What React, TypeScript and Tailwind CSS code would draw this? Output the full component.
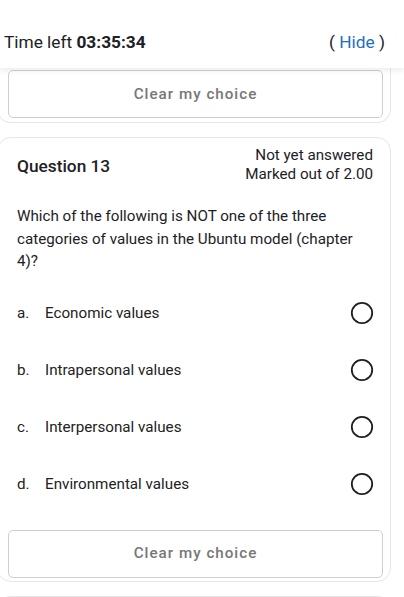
import React from "react";

const options = [
  { letter: "a.", label: "Economic values" },
  { letter: "b.", label: "Intrapersonal values" },
  { letter: "c.", label: "Interpersonal values" },
  { letter: "d.", label: "Environmental values" },
];

function Radio() {
  return (
    <svg width="24" height="24" viewBox="0 0 24 24" className="shrink-0">
      <circle cx="12" cy="12" r="10.2" fill="white" stroke="#1f1f1f" strokeWidth="1.8" />
    </svg>
  );
}

function ClearButton() {
  return (
    <button
      type="button"
      className="flex h-[48px] w-[375px] items-center justify-center rounded-[5px] border border-[#cfcfcf] bg-white text-[15.2px] font-medium tracking-[1px] text-[#777]"
    >
      Clear my choice
    </button>
  );
}

export default function App() {
  return (
    <div className="h-[597px] w-[404px] overflow-hidden bg-white font-['Roboto',sans-serif] text-[#1d2125]">
      {/* Timer bar */}
      <header className="relative z-10 flex h-[68px] items-start justify-between bg-white pl-[4px] pr-[19px] pt-[30px] text-[17.3px] leading-[24px] shadow-[0_3px_6px_rgba(0,0,0,0.07)]">
        <div>
          Time left <span className="font-bold">03:35:34</span>
        </div>
        <div>
          ( <span className="text-[#1f6fbf]">Hide</span> )
        </div>
      </header>

      {/* Previous question (tail) */}
      <div className="-ml-[3px] w-[394px] rounded-b-[14px] border border-t-0 border-[#e6e6e6] pb-[4px] pl-[10px] pt-[2px]">
        <ClearButton />
      </div>

      {/* Question 13 */}
      <div className="-ml-[3px] mt-[14px] w-[394px] rounded-[14px] border border-[#e6e6e6] pb-[3px] pl-[10px] pt-[8px]">
        <div className="flex items-center justify-between pl-[9px] pr-[17px]">
          <h3 className="pt-[3px] text-[17.3px] font-medium">Question 13</h3>
          <div className="text-right text-[15.2px] leading-[19px]">
            <div>Not yet answered</div>
            <div>Marked out of 2.00</div>
          </div>
        </div>

        <p className="mt-[21px] pl-[9px] pr-[20px] text-[15.2px] leading-[22.5px]">
          Which of the following is NOT one of the three categories of values in the Ubuntu model (chapter 4)?
        </p>

        <div className="mt-[12px] pl-[9px] pr-[16px]">
          {options.map((o) => (
            <div key={o.letter} className="flex h-[57px] items-center text-[15.2px] text-[#222]">
              <span className="w-[28px]">{o.letter}</span>
              <span className="flex-1">{o.label}</span>
              <Radio />
            </div>
          ))}
        </div>

        <div className="mt-[17px]">
          <ClearButton />
        </div>
      </div>

      {/* Next card peeking */}
      <div className="-ml-[3px] mt-[14px] h-[40px] w-[394px] rounded-t-[14px] border border-b-0 border-[#e6e6e6]" />
    </div>
  );
}
